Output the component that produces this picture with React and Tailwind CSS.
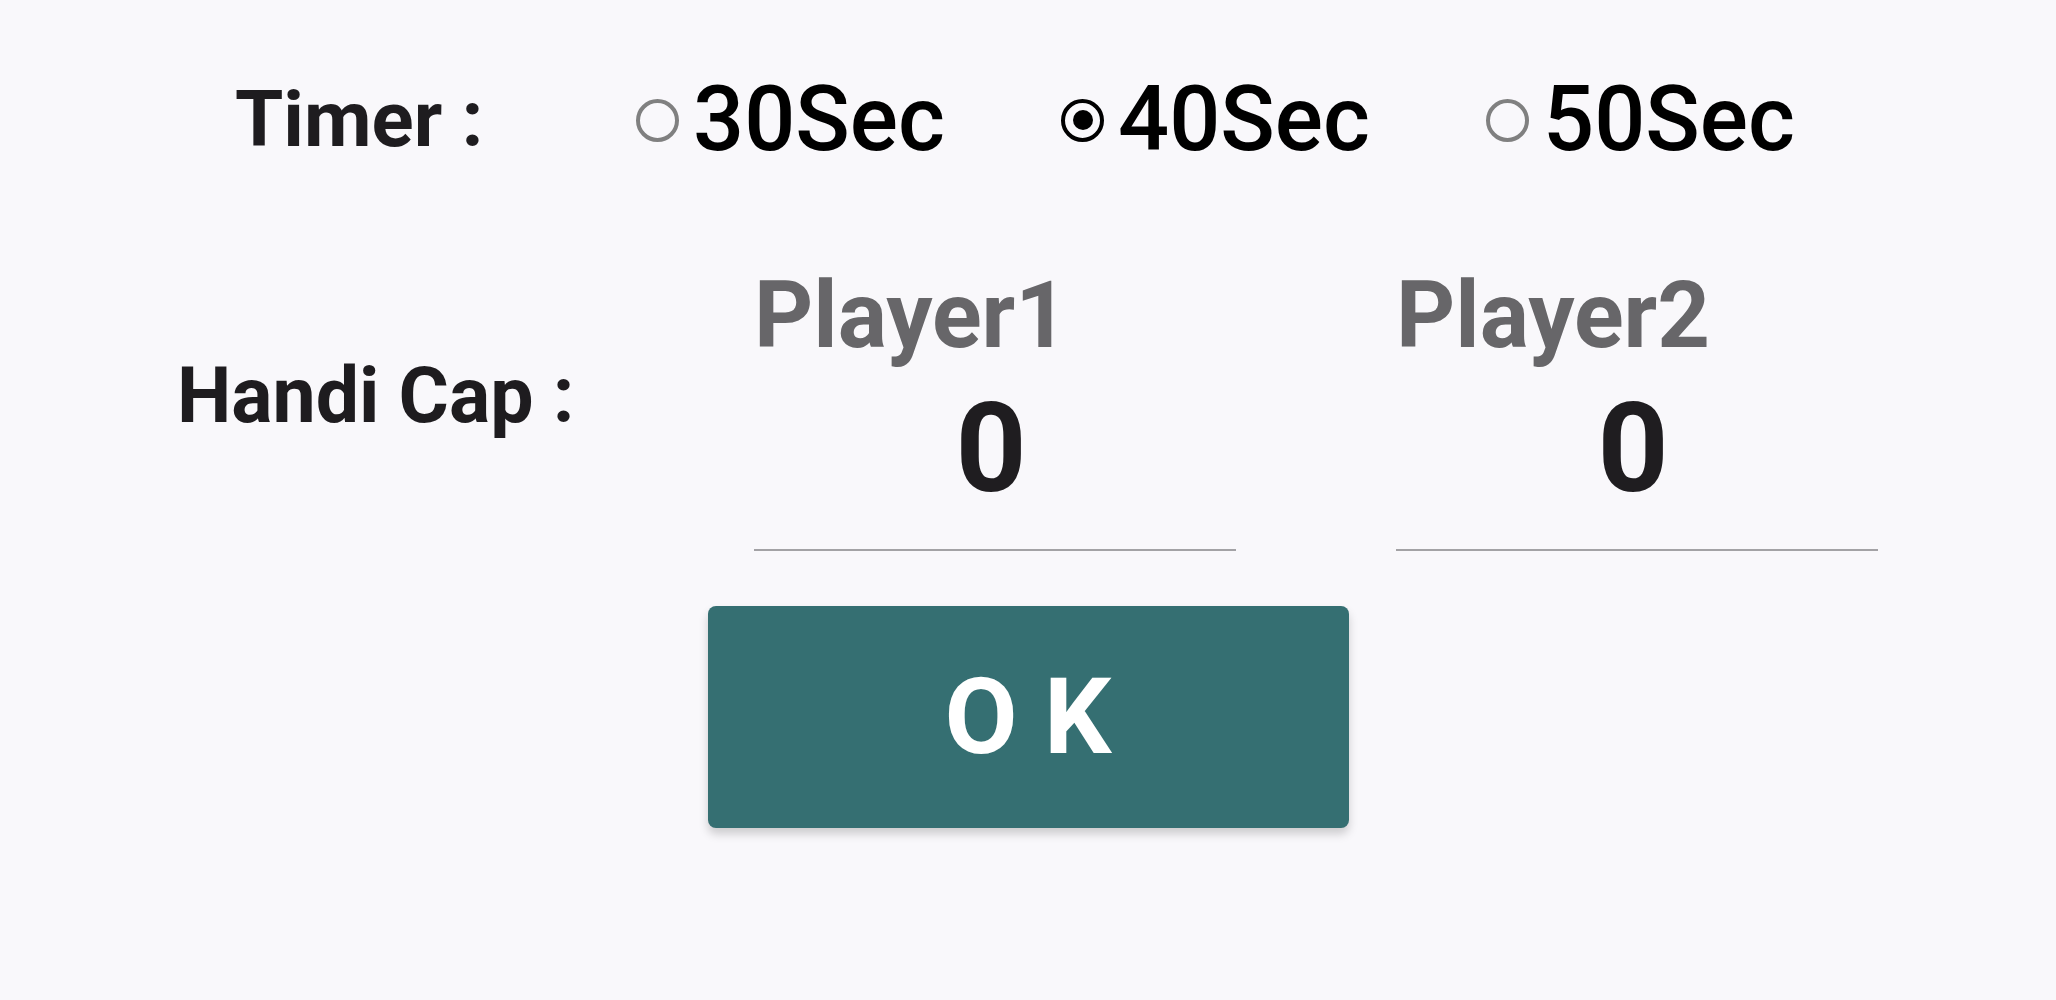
import { useState } from "react";

const timers = ["30Sec", "40Sec", "50Sec"];

const Radio = ({ checked }) => {
  if (checked) {
    return (
      <span className="w-[43px] h-[43px] shrink-0 rounded-full border-[4px] border-black flex items-center justify-center">
        <span className="w-[20px] h-[20px] rounded-full bg-black"></span>
      </span>
    );
  }
  return <span className="w-[43px] h-[43px] shrink-0 rounded-full border-[4px] border-[#808080]"></span>;
};

const PlayerField = ({ label, value }) => {
  return (
    <div className="w-[482px] flex flex-col">
      <p className="text-[92px] leading-none font-bold text-[#676669]">{label}</p>
      <div className="mt-[25px] pb-[38px] pr-[8px] border-b-2 border-[#a3a2a5] text-center text-[124px] leading-none font-bold text-[#1f1d20]">{value}</div>
    </div>
  );
};

const App = () => {
  const [timer, setTimer] = useState("40Sec");

  return (
    <div className="min-h-screen bg-[#f9f8fb] font-['Roboto',_sans-serif] overflow-hidden">
      {/* Timer */}
      <div className="flex items-center h-[90px] mt-[75px] pl-[235px]">
        <p className="w-[401px] text-[78px] leading-none font-bold text-[#1e1c1f]">Timer :</p>
        {timers.map((t) => (
          <div key={t} onClick={() => setTimer(t)} className="w-[425px] flex items-center gap-[14px] cursor-pointer">
            <Radio checked={timer === t} />
            <span className="text-[90px] leading-none font-medium text-black">{t}</span>
          </div>
        ))}
      </div>

      {/* Handi cap */}
      <div className="flex mt-[105px] pl-[177px]">
        <p className="w-[577px] mt-[88px] text-[77px] leading-none font-bold text-[#1e1c1f]">Handi Cap :</p>
        <PlayerField label="Player1" value="0" />
        <div className="ml-[160px]">
          <PlayerField label="Player2" value="0" />
        </div>
      </div>

      <button className="mx-auto mt-[55px] w-[641px] h-[222px] flex items-center justify-center rounded-[8px] bg-[#356f72] text-white text-[106px] leading-none font-bold shadow-[0_6px_10px_rgba(0,0,0,0.18)] cursor-pointer">
        O K
      </button>
    </div>
  );
};

export default App;
